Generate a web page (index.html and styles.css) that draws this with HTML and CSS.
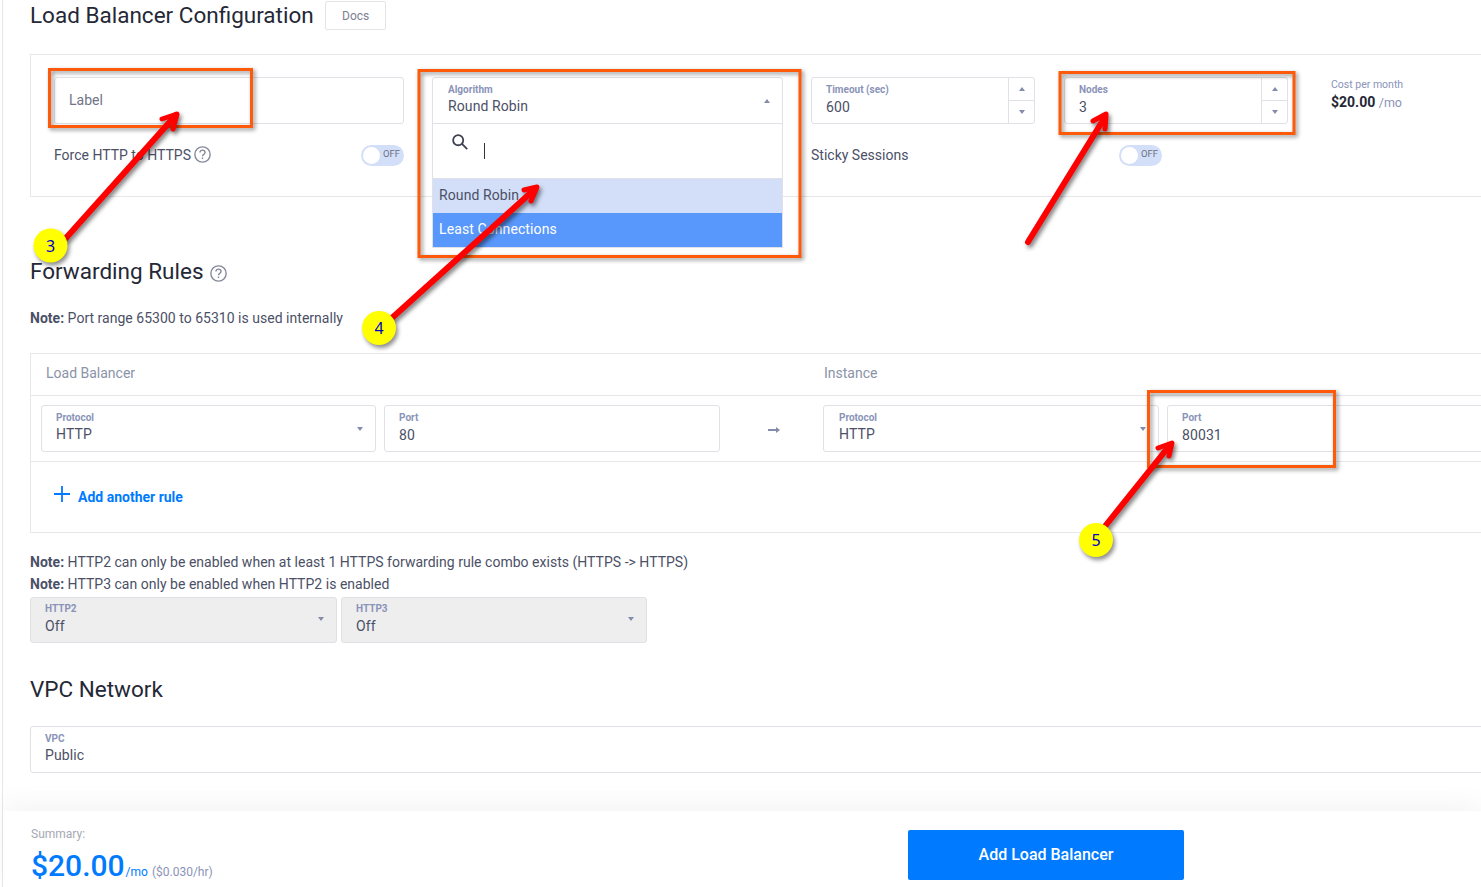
FILE: index.html
```html
<!DOCTYPE html>
<html>
<head>
  <title>Load Balancer Configuration</title>
  <link rel="stylesheet" href="styles.css">
</head>
<body>
  <div class="page">
    <div class="title-row">
      <h1>Load Balancer Configuration</h1>
      <a class="docs-btn">Docs</a>
    </div>

    <div class="card config-card">
      <div class="field label-field"><span class="placeholder">Label</span></div>

      <div class="algo-col">
        <div class="algo-menu">
          <div class="algo-head">
            <div class="field-label">Algorithm</div>
            <div class="field-value">Round Robin</div>
            <span class="caret caret-up"></span>
          </div>
          <div class="algo-search">
            <svg class="search-icon" viewBox="0 0 20 20"><circle cx="8" cy="8" r="5.6"/><path d="M12.2 12.2 18 18"/></svg>
            <span class="text-cursor"></span>
          </div>
          <div class="algo-option selected">Round Robin</div>
          <div class="algo-option active">Least Connections</div>
        </div>
      </div>

      <div class="field stepper">
        <div class="stepper-main">
          <div class="field-label">Timeout (sec)</div>
          <div class="field-value">600</div>
        </div>
        <div class="stepper-btns">
          <div><span class="caret caret-up"></span></div>
          <div><span class="caret caret-down"></span></div>
        </div>
      </div>

      <div class="field stepper">
        <div class="stepper-main">
          <div class="field-label">Nodes</div>
          <div class="field-value">3</div>
        </div>
        <div class="stepper-btns">
          <div><span class="caret caret-up"></span></div>
          <div><span class="caret caret-down"></span></div>
        </div>
      </div>

      <div class="cost">
        <div class="cost-label">Cost per month</div>
        <div class="cost-value"><b>$20.00</b> <span>/mo</span></div>
      </div>

      <div class="switch-row force-row">
        <span class="switch-text">Force HTTP to HTTPS
          <svg class="help-icon" viewBox="0 0 16 16"><circle cx="8" cy="8" r="7.2"/><path d="M5.6 6.200C5.600 4.800 6.700 3.900 8 3.900s2.400.9 2.400 2.200c0 1.800-2.400 1.800-2.400 3.600"/><path d="M8 10.800v1.500"/></svg>
        </span>
        <div class="toggle"><span class="knob"></span><span class="toggle-text">OFF</span></div>
      </div>
      <div class="switch-row sticky-row">
        <span class="switch-text">Sticky Sessions</span>
        <div class="toggle"><span class="knob"></span><span class="toggle-text">OFF</span></div>
      </div>
    </div>

    <h2 class="rules-title">Forwarding Rules
      <svg class="help-icon" viewBox="0 0 16 16"><circle cx="8" cy="8" r="7.2"/><path d="M5.600 6.200C5.600 4.800 6.700 3.900 8 3.900s2.400.9 2.400 2.200c0 1.800-2.400 1.800-2.400 3.600"/><path d="M8 10.800v1.500"/></svg>
    </h2>
    <p class="note port-note"><b>Note:</b> Port range 65300 to 65310 is used internally</p>

    <div class="card rules-card">
      <div class="rules-head">
        <div class="head-lb">Load Balancer</div>
        <div class="head-inst">Instance</div>
      </div>
      <div class="rule-row">
        <div class="field select-field col-protocol">
          <div class="field-label">Protocol</div>
          <div class="field-value">HTTP</div>
          <span class="caret caret-down"></span>
        </div>
        <div class="field select-field col-port">
          <div class="field-label">Port</div>
          <div class="field-value num">80</div>
        </div>
        <svg class="rule-arrow" viewBox="0 0 12 8"><path d="M0 3h8V1l4 3-4 3V5H0z"/></svg>
        <div class="field select-field col-protocol-2">
          <div class="field-label">Protocol</div>
          <div class="field-value">HTTP</div>
          <span class="caret caret-down"></span>
        </div>
        <div class="field select-field col-port-2">
          <div class="field-label">Port</div>
          <div class="field-value num">80031</div>
        </div>
      </div>
      <div class="add-row">
        <svg class="plus-icon" viewBox="0 0 16 16"><path d="M8 0v16M0 8h16"/></svg>
        <a class="add-link">Add another rule</a>
      </div>
    </div>

    <div class="http-notes">
      <p class="note"><b>Note:</b> HTTP2 can only be enabled when at least 1 HTTPS forwarding rule combo exists (HTTPS -&gt; HTTPS)</p>
      <p class="note"><b>Note:</b> HTTP3 can only be enabled when HTTP2 is enabled</p>
    </div>
    <div class="http-selects">
      <div class="field select-field disabled http2">
        <div class="field-label">HTTP2</div>
        <div class="field-value">Off</div>
        <span class="caret caret-down"></span>
      </div>
      <div class="field select-field disabled http3">
        <div class="field-label">HTTP3</div>
        <div class="field-value">Off</div>
        <span class="caret caret-down"></span>
      </div>
    </div>

    <h2 class="vpc-title">VPC Network</h2>
    <div class="field select-field vpc-field">
      <div class="field-label">VPC</div>
      <div class="field-value">Public</div>
    </div>

    <h2 class="firewall-title">Firewall Rules</h2>
  </div>

  <div class="summary-bar">
    <div class="summary">
      <div class="summary-label">Summary:</div>
      <div class="summary-price"><span class="price">$20.00</span><span class="per-mo">/mo</span> <span class="per-hr">($0.030/hr)</span></div>
    </div>
    <button class="add-btn">Add Load Balancer</button>
  </div>

  <!-- annotations drawn on top of the screenshot -->
  <svg class="notes-layer" width="1481" height="887" viewBox="0 0 1481 887">
    <g class="note-box">
      <rect x="49.500" y="69.500" width="202" height="57"/>
      <rect x="419" y="70.500" width="381" height="186"/>
      <rect x="1060" y="72.500" width="234" height="61"/>
      <rect x="1148.500" y="391.500" width="186" height="75"/>
    </g>
    <g class="note-arrow">
      <path class="shaft" d="M66 238 176 115"/>
      <path class="shaft" d="M393 317 535 189"/>
      <path class="shaft" d="M1028 242 1105 117"/>
      <path class="shaft" d="M1106 525 1170 445"/>
      <path d="M162 119 177 114 173 129"/>
      <path d="M524 190 537 187 531 201"/>
      <path d="M1093 121 1106 114 1105 129"/>
      <path d="M1158 448 1172 443 1169 456"/>
    </g>
    <g class="note-dot">
      <circle cx="50.500" cy="245.500" r="17"/>
      <circle cx="379" cy="328" r="17"/>
      <circle cx="1096" cy="540" r="17"/>
    </g>
    <g class="note-num">
      <text x="50.500" y="251.500">3</text>
      <text x="379" y="334">4</text>
      <text x="1096" y="546">5</text>
    </g>
  </svg>
</body>
</html>
```

FILE: styles.css
```css
html, body {
  margin: 0;
  height: 100%;
  overflow: hidden;
}

body {
  font-family: Roboto, "Liberation Sans", sans-serif;
  background-color: #fff;
  color: #4b5066;
  position: relative;
}

.page {
  height: 887px;
  overflow: hidden;
  box-sizing: border-box;
  margin-left: 2px;
  border-left: 1px solid #e6e7ea;
  padding-left: 27px;
}

h1, h2 {
  margin: 0;
  font-weight: 400;
  color: #242836;
  font-size: 22.500px;
  line-height: 28px;
}

.title-row {
  display: flex;
  align-items: center;
  gap: 11px;
  height: 30px;
}

.docs-btn {
  width: 61px;
  height: 29px;
  margin-top: 1px;
  padding-left: 1px;
  box-sizing: border-box;
  border: 1px solid #e3e4e8;
  border-radius: 2px;
  color: #7b8194;
  font-size: 12px;
  line-height: 28px;
  text-align: center;
}

.card {
  width: 1600px;
  box-sizing: border-box;
  border: 1px solid #e6e7ea;
}

.config-card {
  margin-top: 24px;
  height: 143px;
  padding: 22px 23px 0;
  display: grid;
  grid-template-columns: 350px 351px 224px 225px 1fr;
  grid-template-rows: 47px auto;
  column-gap: 28px;
  align-content: start;
}

.config-card > :nth-child(4) {
  margin-left: 1px;
}

.field {
  box-sizing: border-box;
  border: 1px solid #dfe1e6;
  border-radius: 3px;
  background-color: #fff;
  position: relative;
}

.field-label {
  font-size: 10px;
  line-height: 12px;
  font-weight: 700;
  color: #8a93b8;
}

.field-value {
  font-size: 14px;
  line-height: 18px;
  letter-spacing: 0.1px;
  margin-top: 1px;
  color: #4b5066;
}

.placeholder {
  display: block;
  padding-left: 14px;
  font-size: 14px;
  line-height: 45px;
  color: #6f7487;
}

.caret {
  display: block;
  width: 0;
  height: 0;
  border-left: 3px solid transparent;
  border-right: 3px solid transparent;
}

.caret-up {
  border-bottom: 4px solid #858bab;
}

.caret-down {
  border-top: 4px solid #858bab;
}

.select-field {
  height: 47px;
  padding: 7px 14px 0;
}

.select-field .caret {
  position: absolute;
  right: 12px;
  top: 20px;
}

/* algorithm dropdown is open, it hangs over the card edge */
.algo-col {
  position: relative;
}

.algo-menu {
  position: absolute;
  left: 0;
  top: 0;
  width: 351px;
  box-sizing: border-box;
  border: 1px solid #dfe1e6;
  border-radius: 3px 3px 0 0;
  background-color: #fff;
  z-index: 2;
}

.algo-head {
  position: relative;
  height: 46px;
  box-sizing: border-box;
  padding: 6px 15px 0;
  border-bottom: 1px solid #dfe1e6;
}

.algo-head .caret {
  position: absolute;
  right: 12px;
  top: 21px;
}

.algo-search {
  height: 55px;
  box-sizing: border-box;
  border-bottom: 1px solid #dfe1e6;
  position: relative;
}

.search-icon {
  position: absolute;
  left: 18px;
  top: 9px;
  width: 18px;
  height: 18px;
  fill: none;
  stroke: #3f434f;
  stroke-width: 2;
}

.text-cursor {
  position: absolute;
  left: 51px;
  top: 19px;
  width: 1px;
  height: 16px;
  background-color: #333;
}

.algo-option {
  height: 34px;
  padding-left: 6px;
  font-size: 14px;
  letter-spacing: 0.1px;
  line-height: 33px;
}

.algo-option.selected {
  background-color: #d3dff8;
  color: #4b5066;
}

.algo-option.active {
  background-color: #5897fb;
  color: #fff;
}

.stepper {
  display: flex;
  height: 47px;
}

.stepper-main {
  flex: 1;
  padding: 6px 14px 0;
}

.stepper-main .field-value {
  margin-top: 2px;
}

.stepper-btns {
  width: 25px;
  border-left: 1px solid #dfe1e6;
  display: flex;
  flex-direction: column;
}

.stepper-btns div {
  flex: 1;
  display: flex;
  align-items: center;
  justify-content: center;
}

.stepper-btns div + div {
  border-top: 1px solid #dfe1e6;
}

.cost {
  margin-left: 15px;
  padding-top: 2px;
}

.cost-label {
  font-size: 10.500px;
  line-height: 12px;
  color: #8a93b8;
}

.cost-value {
  margin-top: 2px;
  font-size: 14px;
  line-height: 18px;
  color: #8a93b8;
}

.cost-value span {
  font-size: 12.500px;
}

.cost-value b {
  color: #242836;
  font-weight: 700;
}

.switch-row {
  display: flex;
  align-items: center;
  justify-content: space-between;
  height: 22px;
  margin-top: 20px;
  font-size: 14px;
  color: #4b5066;
}

.force-row {
  grid-column: 1;
  grid-row: 2;
}

.force-row .switch-text {
  margin-top: -2px;
}

.sticky-row {
  grid-column: 3 / span 2;
  grid-row: 2;
  width: 351px;
}

.help-icon {
  width: 17px;
  height: 17px;
  vertical-align: -3px;
  fill: none;
  stroke: #85899a;
  stroke-width: 1.300;
}

.toggle {
  position: relative;
  width: 43px;
  height: 21px;
  border-radius: 11px;
  background-color: #d3dff8;
}

.knob {
  position: absolute;
  left: 2px;
  top: 2px;
  width: 17px;
  height: 17px;
  border-radius: 50%;
  background-color: #fff;
}

.toggle-text {
  position: absolute;
  right: 4px;
  top: 3px;
  font-size: 9.500px;
  line-height: 12px;
  color: #6c7183;
}

.rules-title {
  margin-top: 60px;
}

.rules-title .help-icon {
  margin-left: 1px;
}

.note {
  margin: 0;
  font-size: 14px;
  letter-spacing: 0.02px;
  line-height: 22px;
  color: #4b5066;
}

.port-note {
  margin-top: 22px;
}

.rules-card {
  margin-top: 24px;
  height: 180px;
}

.rules-head {
  height: 41px;
  border-bottom: 1px solid #e6e7ea;
  font-size: 14px;
  line-height: 39px;
  color: #8a93a8;
  display: flex;
}

.head-lb {
  width: 793px;
  padding-left: 15px;
  box-sizing: border-box;
}

.rule-row {
  height: 66px;
  box-sizing: border-box;
  border-bottom: 1px solid #e6e7ea;
  display: flex;
  align-items: flex-start;
  padding: 9px 0 0 10px;
}

.rule-row .field {
  flex-shrink: 0;
  padding-top: 6px;
}

.rule-row .caret {
  top: 21px;
}

.col-protocol {
  width: 335px;
}

.col-port {
  width: 336px;
  margin-left: 8px;
}

.rule-row .col-protocol-2 {
  width: 336px;
  padding-left: 15px;
}

.col-port-2 {
  width: 500px;
  margin-left: 8px;
}

.num {
  margin-top: 2px;
}

.rule-arrow {
  flex-shrink: 0;
  width: 12px;
  height: 8px;
  margin: 21px 43px 0 48px;
  fill: #858bab;
}

.add-row {
  display: flex;
  align-items: center;
  height: 70px;
  padding-left: 23px;
  gap: 8px;
}

.plus-icon {
  width: 16px;
  height: 16px;
  margin-top: -7px;
  fill: none;
  stroke: #007bff;
  stroke-width: 1.800;
}

.add-link {
  color: #007bff;
  font-size: 14px;
  font-weight: 700;
}

.http-notes {
  margin-top: 18px;
}

.http-selects {
  display: flex;
  gap: 4px;
  margin-top: 2px;
}

.http2 {
  width: 307px;
}

.http3 {
  width: 306px;
}

.disabled {
  background-color: #eeeeee;
  height: 46px;
  padding-top: 5px;
}

.disabled .field-value {
  margin-top: 2px;
}

.disabled .caret {
  top: 19px;
}

.vpc-title {
  margin-top: 32px;
}

.vpc-field {
  width: 1600px;
  margin-top: 23px;
  padding-top: 6px;
}

/* only the top of this heading shows above the summary bar */
.firewall-title {
  height: 7px;
  overflow: hidden;
  line-height: 26px;
  margin-top: 33px;
}

.summary-bar {
  position: absolute;
  left: 3px;
  right: 0;
  bottom: 0;
  height: 76px;
  background-color: #fff;
  box-shadow: 0 -8px 26px rgba(0, 0, 0, 0.045);
  display: flex;
  align-items: flex-start;
  justify-content: space-between;
  z-index: 3;
}

.summary {
  padding: 16px 0 0 28px;
}

.summary-label {
  font-size: 12px;
  line-height: 14px;
  color: #a5a8b3;
}

.summary-price {
  margin-top: 7px;
  line-height: 36px;
}

.price {
  font-size: 30px;
  font-weight: 500;
  color: #007bff;
}

.per-mo {
  font-size: 12px;
  margin-left: 1px;
  color: #007bff;
}

.per-hr {
  font-size: 12px;
  color: #8a93b8;
}

.add-btn {
  width: 276px;
  height: 50px;
  margin: 19px 297px 0 0;
  padding-bottom: 3px;
  border: none;
  border-radius: 2px;
  background-color: #007bff;
  color: #fff;
  font-family: Roboto, "Liberation Sans", sans-serif;
  font-size: 16px;
  font-weight: 500;
}

.notes-layer {
  position: absolute;
  left: 0;
  top: 0;
  z-index: 5;
  pointer-events: none;
}

.note-box {
  fill: none;
  stroke: #ff5a0a;
  stroke-width: 3;
  filter: drop-shadow(2px 2px 2px rgba(0, 0, 0, 0.45));
}

.note-arrow {
  fill: none;
  stroke: #ff0000;
  stroke-width: 5;
  stroke-linecap: round;
  stroke-linejoin: round;
  filter: drop-shadow(2px 3px 2px rgba(0, 0, 0, 0.5));
}

.note-arrow .shaft {
  stroke-width: 6;
}

.note-dot {
  fill: #ffff00;
  filter: drop-shadow(2px 3px 2px rgba(0, 0, 0, 0.45));
}

.note-num {
  fill: #0000c8;
  font-family: "Noto Sans", sans-serif;
  font-size: 16px;
  text-anchor: middle;
}
```
